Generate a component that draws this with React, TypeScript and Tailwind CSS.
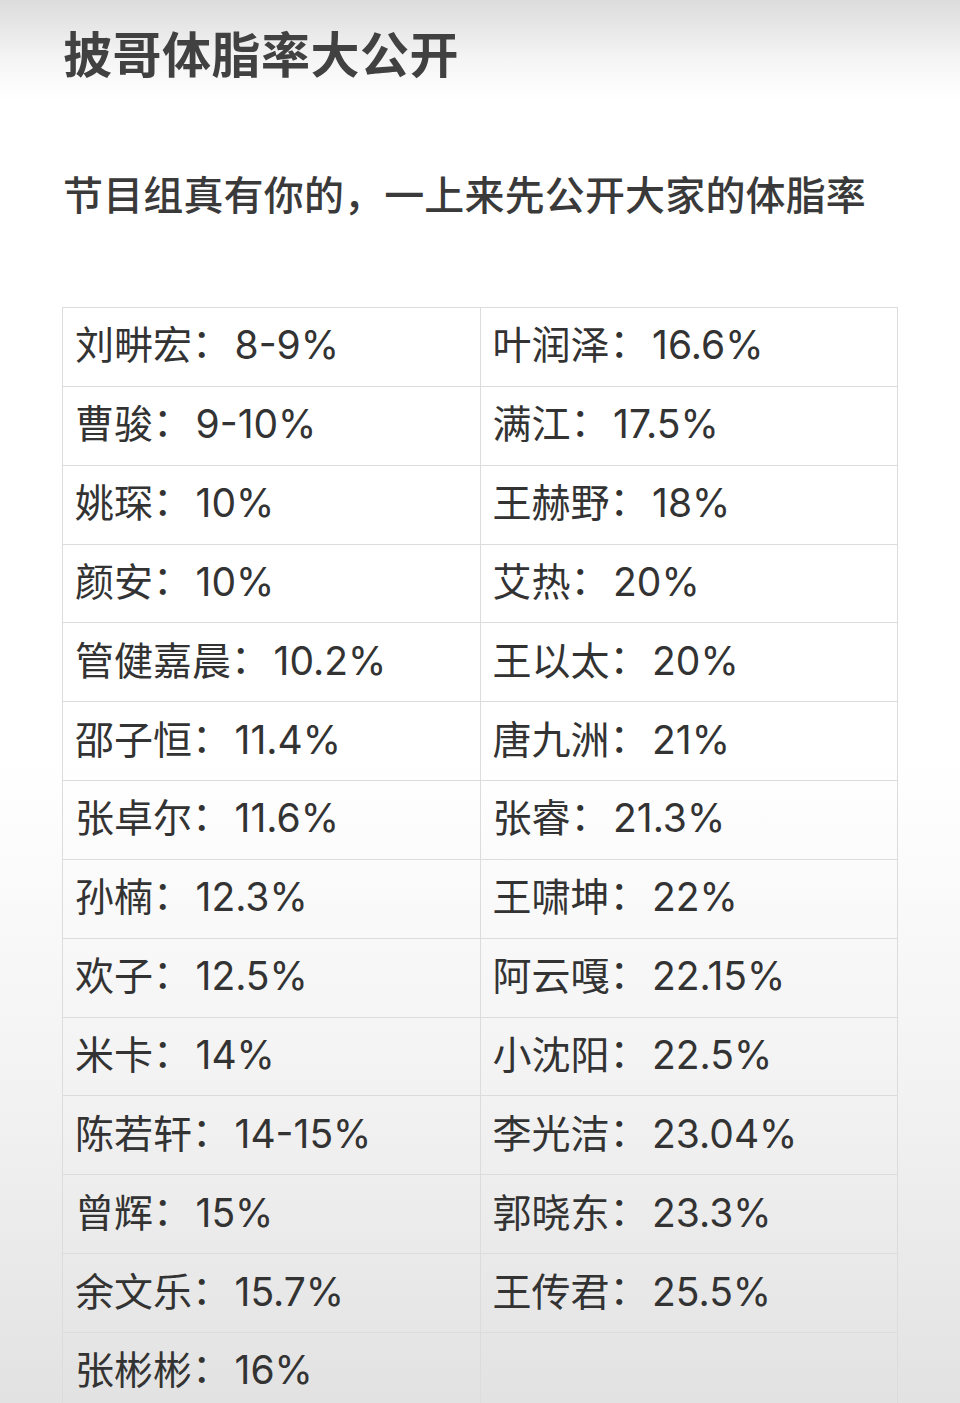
import React from "react";

const rows: [string, string | null][] = [
  ["刘畊宏：8-9%", "叶润泽：16.6%"],
  ["曹骏：9-10%", "满江：17.5%"],
  ["姚琛：10%", "王赫野：18%"],
  ["颜安：10%", "艾热：20%"],
  ["管健嘉晨：10.2%", "王以太：20%"],
  ["邵子恒：11.4%", "唐九洲：21%"],
  ["张卓尔：11.6%", "张睿：21.3%"],
  ["孙楠：12.3%", "王啸坤：22%"],
  ["欢子：12.5%", "阿云嘎：22.15%"],
  ["米卡：14%", "小沈阳：22.5%"],
  ["陈若轩：14-15%", "李光洁：23.04%"],
  ["曾辉：15%", "郭晓东：23.3%"],
  ["余文乐：15.7%", "王传君：25.5%"],
  ["张彬彬：16%", null],
];

function Cell({ text }: { text: string | null }) {
  let name = "";
  let value = "";
  if (text) {
    const idx = text.indexOf("：");
    name = text.slice(0, idx);
    value = text.slice(idx + 1);
  }
  return (
    <div className="h-[78.85px] border-r border-b border-[#dcdcdc] flex items-center pl-[12px] pb-[6px] text-[39px] leading-[48px] text-[#333333] whitespace-nowrap">
      {text && (
        <span>
          <span>{name}</span>
          <span className="inline-block text-center font-['Noto_Sans_CJK_JP',sans-serif] [font-feature-settings:'halt']">
            ：
          </span>
          <span className="ml-[23px] font-['Inter','Liberation_Sans',sans-serif] font-normal">
            {value}
          </span>
        </span>
      )}
    </div>
  );
}

export default function App() {
  return (
    <div
      className="w-[960px] h-[1403px] overflow-hidden bg-[linear-gradient(to_bottom,#dcdcdc_0px,#f5f5f5_60px,#ffffff_100px,#ffffff_760px,#f2f2f2_1100px,#e2e2e2_1403px)] text-[#333333]"
      style={{ fontFamily: '"Noto Sans CJK SC", "Noto Sans", sans-serif' }}
    >
      <div className="pl-[63px] pt-[24px]">
        <h1 className="text-[49px] leading-[56px] font-bold text-[#414141] tracking-[0.5px]">
          披哥体脂率大公开
        </h1>
        <p className="mt-[89px] text-[40px] leading-[48px] font-medium text-[#3a3a3a] tracking-[0.15px]">
          节目组真有你的，一上来先公开大家的体脂率
        </p>
      </div>
      <div className="ml-[62px] mt-[90px] w-[836px] grid grid-cols-2 border-l border-t border-[#dcdcdc]">
        {rows.map(([a, b], i) => (
          <React.Fragment key={i}>
            <Cell text={a} />
            <Cell text={b} />
          </React.Fragment>
        ))}
      </div>
    </div>
  );
}
